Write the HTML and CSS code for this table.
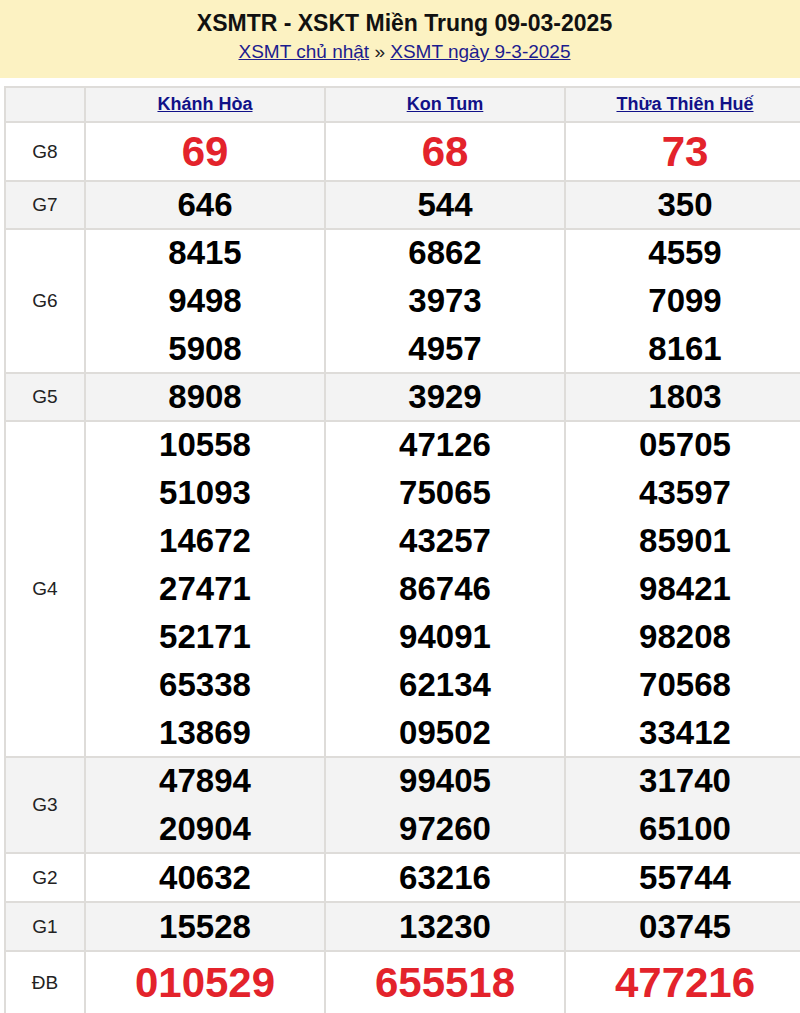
FILE: index.html
```html
<!DOCTYPE html>
<html lang="vi">
<head>
<meta charset="utf-8">
<title>XSMTR - XSKT Miền Trung 09-03-2025</title>
<link rel="stylesheet" href="styles.css">
</head>
<body>
<div class="head">
  <h1 class="title">XSMTR - XSKT Miền Trung 09-03-2025</h1>
  <div class="crumbs"><a href="#">XSMT chủ nhật</a> » <a href="#">XSMT ngày 9-3-2025</a></div>
</div>
<table class="kq">
  <colgroup><col class="c-lbl"><col class="c-prov"><col class="c-prov"><col class="c-prov"></colgroup>
  <thead>
    <tr class="hrow"><th></th><th><a href="#">Khánh Hòa</a></th><th><a href="#">Kon Tum</a></th><th><a href="#">Thừa Thiên Huế</a></th></tr>
  </thead>
  <tbody>
    <tr class="g8"><td class="lbl">G8</td><td class="big">69</td><td class="big">68</td><td class="big">73</td></tr>
    <tr class="alt"><td class="lbl">G7</td><td><div class="n">646</div></td><td><div class="n">544</div></td><td><div class="n">350</div></td></tr>
    <tr><td class="lbl">G6</td>
      <td><div class="n">8415</div><div class="n">9498</div><div class="n">5908</div></td>
      <td><div class="n">6862</div><div class="n">3973</div><div class="n">4957</div></td>
      <td><div class="n">4559</div><div class="n">7099</div><div class="n">8161</div></td></tr>
    <tr class="alt"><td class="lbl">G5</td><td><div class="n">8908</div></td><td><div class="n">3929</div></td><td><div class="n">1803</div></td></tr>
    <tr><td class="lbl">G4</td>
      <td><div class="n">10558</div><div class="n">51093</div><div class="n">14672</div><div class="n">27471</div><div class="n">52171</div><div class="n">65338</div><div class="n">13869</div></td>
      <td><div class="n">47126</div><div class="n">75065</div><div class="n">43257</div><div class="n">86746</div><div class="n">94091</div><div class="n">62134</div><div class="n">09502</div></td>
      <td><div class="n">05705</div><div class="n">43597</div><div class="n">85901</div><div class="n">98421</div><div class="n">98208</div><div class="n">70568</div><div class="n">33412</div></td></tr>
    <tr class="alt"><td class="lbl">G3</td>
      <td><div class="n">47894</div><div class="n">20904</div></td>
      <td><div class="n">99405</div><div class="n">97260</div></td>
      <td><div class="n">31740</div><div class="n">65100</div></td></tr>
    <tr class="tall"><td class="lbl">G2</td><td><div class="n">40632</div></td><td><div class="n">63216</div></td><td><div class="n">55744</div></td></tr>
    <tr class="alt tall"><td class="lbl">G1</td><td><div class="n">15528</div></td><td><div class="n">13230</div></td><td><div class="n">03745</div></td></tr>
    <tr class="db"><td class="lbl">ĐB</td><td class="big">010529</td><td class="big">655518</td><td class="big">477216</td></tr>
  </tbody>
</table>
</body>
</html>
```
FILE: styles.css
```css
html { overflow: hidden; }
body {
  margin: 0;
  font-family: "Liberation Sans", Arial, sans-serif;
  background: #fff;
  color: #000;
}
.head {
  background: #fcf2c2;
  height: 78px;
  box-sizing: border-box;
  padding: 8px 0 0 9px;
  text-align: center;
}
.title {
  margin: 0;
  font-size: 23px;
  line-height: 30px;
  font-weight: bold;
  color: #111;
}
.crumbs {
  font-size: 19px;
  line-height: 24px;
  margin-top: 2px;
  color: #222;
}
.crumbs a { color: #1c1c8e; }
.kq {
  margin: 8px 0 0 4px;
  border-collapse: collapse;
  table-layout: fixed;
  width: 800px;
}
.c-lbl { width: 80px; }
.c-prov { width: 240px; }
.kq th, .kq td {
  border: 2px solid #dedcd9;
  padding: 0;
  text-align: center;
  vertical-align: middle;
}
.hrow th {
  background: #f3f3f3;
  height: 33px;
  font-size: 18px;
  font-weight: bold;
}
.hrow a { color: #111188; }
.alt td { background: #f3f3f3; }
.lbl {
  font-size: 19px;
  color: #222;
}
.n {
  font-size: 33px;
  font-weight: bold;
  line-height: 48px;
}
.n:first-child { margin-top: -1px; }
.n:last-child { margin-bottom: -1px; }
.tall .n { line-height: 49px; }
.big {
  color: #e3232b;
  font-size: 42px;
  font-weight: bold;
}
.g8 td { height: 57px; }
.db td { height: 62px; }
```
